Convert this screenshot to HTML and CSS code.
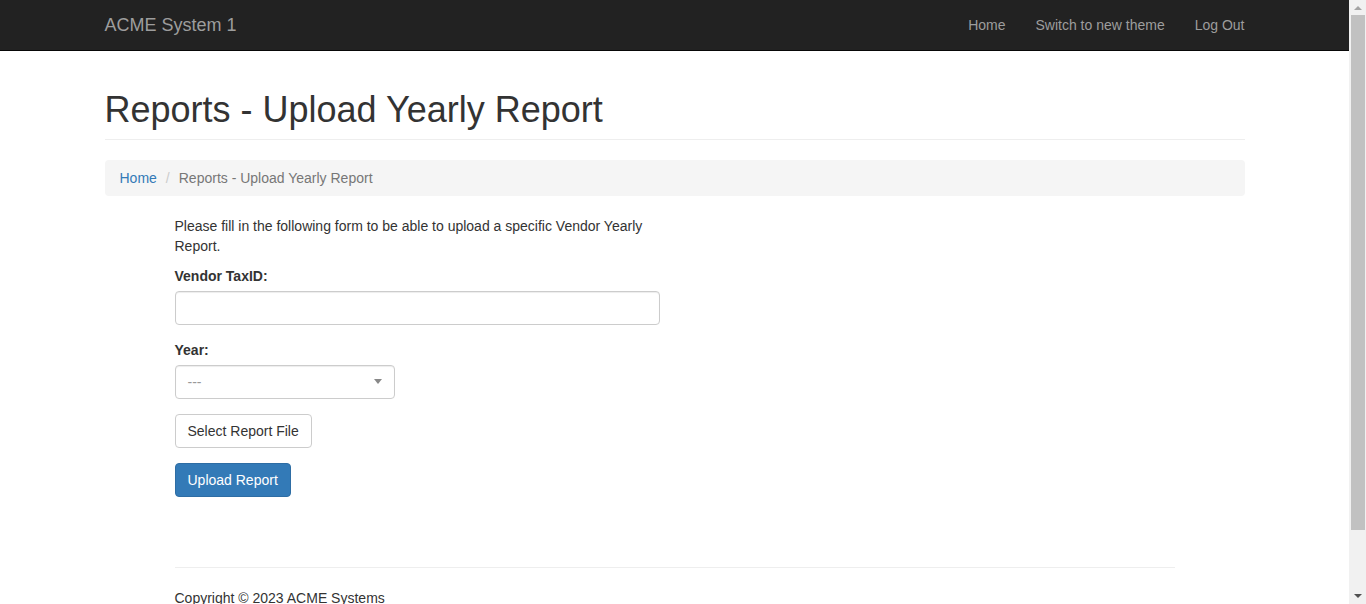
FILE: index.html
```html
<!DOCTYPE html>
<html lang="en">
<head>
<meta charset="utf-8">
<title>Reports - Upload Yearly Report</title>
<link rel="stylesheet" href="styles.css">
</head>
<body>
<nav class="navbar">
  <div class="container navbar-inner">
    <a class="brand" href="#">ACME System 1</a>
    <ul class="nav-links">
      <li><a href="#">Home</a></li>
      <li><a href="#">Switch to new theme</a></li>
      <li><a href="#">Log Out</a></li>
    </ul>
  </div>
</nav>

<div class="container">
  <div class="page-header">
    <h1>Reports - Upload Yearly Report</h1>
  </div>
  <ol class="breadcrumb">
    <li><a href="#">Home</a></li>
    <li class="sep">/</li>
    <li class="active">Reports - Upload Yearly Report</li>
  </ol>
</div>

<div class="content">
  <form class="upload-form">
    <p class="intro">Please fill in the following form to be able to upload a specific Vendor Yearly Report.</p>
    <div class="form-group">
      <label class="label">Vendor TaxID:</label>
      <input class="input" type="text">
    </div>
    <div class="form-group">
      <label class="label">Year:</label>
      <div class="select">
        <span class="select-text">---</span>
        <span class="caret"></span>
      </div>
    </div>
    <div class="form-group">
      <button type="button" class="btn btn-default">Select Report File</button>
    </div>
    <div class="form-group">
      <button type="button" class="btn btn-primary">Upload Report</button>
    </div>
  </form>
  <hr class="rule">
  <footer class="footer">
    <p>Copyright © 2023 ACME Systems</p>
  </footer>
</div>

<div class="scrollbar" aria-hidden="true">
  <span class="arrow arrow-up"></span>
  <span class="thumb"></span>
  <span class="arrow arrow-down"></span>
</div>
</body>
</html>
```

FILE: styles.css
```css
* { box-sizing: border-box; }

html, body {
  margin: 0;
  padding: 0;
}

body {
  font-family: "Liberation Sans", Arial, Helvetica, sans-serif;
  font-size: 14px;
  line-height: 20px;
  color: #333;
  background: #fff;
  margin-right: 17px;
}

a { text-decoration: none; }

.container {
  width: 1170px;
  padding: 0 15px;
  margin: 0 auto;
}

.navbar {
  background: #222;
  border-bottom: 1px solid #080808;
  height: 51px;
}

.navbar-inner {
  display: flex;
  justify-content: space-between;
  align-items: stretch;
  height: 50px;
}

.brand {
  font-size: 18px;
  line-height: 20px;
  color: #9d9d9d;
  padding: 15px 15px;
  margin-left: -15px;
  height: 50px;
}

.nav-links {
  display: flex;
  list-style: none;
  margin: 0 -15px 0 0;
  padding: 0;
}

.nav-links a {
  display: block;
  color: #9d9d9d;
  padding: 15px;
  line-height: 20px;
}

.page-header {
  margin: 39px 0 20px;
  padding-bottom: 9px;
  border-bottom: 1px solid #eee;
}

.page-header h1 {
  margin: 0;
  font-size: 36px;
  font-weight: 500;
  line-height: 1.1;
}

.breadcrumb {
  display: flex;
  list-style: none;
  margin: 0 0 20px;
  padding: 8px 15px;
  background: #f5f5f5;
  border-radius: 4px;
}

.breadcrumb a { color: #337ab7; }
.breadcrumb .sep { color: #ccc; padding: 0 5px; margin: 0 4px 0 4px; }
.breadcrumb .active { color: #777; }

.content {
  width: 1030px;
  padding: 0 15px 150px;
  margin: 0 auto;
}

.upload-form {
  width: 485px;
  margin-bottom: 70px;
}

.intro { margin: 0 0 10px; }

.form-group { margin-bottom: 15px; }

.label {
  display: block;
  font-weight: bold;
  margin-bottom: 5px;
}

.input {
  display: block;
  width: 100%;
  height: 34px;
  padding: 6px 12px;
  font: inherit;
  border: 1px solid #ccc;
  border-radius: 4px;
  box-shadow: inset 0 1px 1px rgba(0,0,0,.075);
}

.select {
  display: flex;
  align-items: center;
  justify-content: space-between;
  width: 220px;
  height: 34px;
  padding: 6px 12px 6px 12px;
  border: 1px solid #ccc;
  border-radius: 4px;
  box-shadow: inset 0 1px 1px rgba(0,0,0,.075);
}

.select-text { color: #999; }

.caret {
  width: 0;
  height: 0;
  border-style: solid;
  border-width: 5px 4px 0 4px;
  border-color: #888 transparent transparent transparent;
}

.btn {
  display: inline-block;
  font: inherit;
  padding: 6px 12px;
  line-height: 20px;
  border: 1px solid transparent;
  border-radius: 4px;
  cursor: pointer;
}

.btn-default {
  color: #333;
  background: #fff;
  border-color: #ccc;
}

.btn-primary {
  color: #fff;
  background: #337ab7;
  border-color: #2e6da4;
}

.rule {
  margin: 20px 0;
  border: 0;
  border-top: 1px solid #eee;
}

.footer p { margin: 0 0 10px; }

/* simulated browser scrollbar */
.scrollbar {
  position: fixed;
  top: 0;
  right: 0;
  width: 17px;
  height: 100%;
  background: #f1f1f1;
  display: flex;
  flex-direction: column;
  align-items: center;
}

.arrow {
  width: 0;
  height: 0;
  border-style: solid;
  border-color: transparent;
}

.arrow-up {
  margin: 6px 0 5px;
  border-width: 0 4px 4px 4px;
  border-bottom-color: #a3a3a3;
}

.arrow-down {
  margin-top: auto;
  margin-bottom: 6px;
  border-width: 4px 4px 0 4px;
  border-top-color: #505050;
}

.thumb {
  width: 14px;
  height: 515px;
  background: #c1c1c1;
}
```
